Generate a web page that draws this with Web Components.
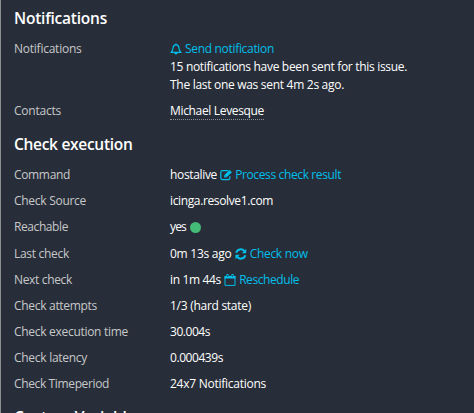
<!DOCTYPE html>
<html lang="en">
<head>
<meta charset="utf-8">
<title>Host detail</title>
<style>
  html, body { margin: 0; height: 100%; overflow: hidden; background: #282e39; }
</style>
</head>
<body>
<detail-pane>
  <detail-section>
    <fit-text slot="title" width="93">Notifications</fit-text>
    <detail-row>
      <fit-text slot="label" width="67.500">Notifications</fit-text>
      <div><action-link icon="bell"><fit-text width="89">Send notification</fit-text></action-link></div>
      <div><fit-text width="237">15 notifications have been sent for this issue.</fit-text></div>
      <div><fit-text width="174">The last one was sent 4m 2s ago.</fit-text></div>
    </detail-row>
    <detail-row>
      <fit-text slot="label" width="47">Contacts</fit-text>
      <contact-name><fit-text width="94">Michael Levesque</fit-text></contact-name>
    </detail-row>
  </detail-section>
  <detail-section>
    <fit-text slot="title" width="118.5">Check execution</fit-text>
    <detail-row>
      <fit-text slot="label" width="56">Command</fit-text>
      <fit-text width="47">hostalive</fit-text>
      <action-link icon="edit"><fit-text width="106">Process check result</fit-text></action-link>
    </detail-row>
    <detail-row>
      <fit-text slot="label" width="72">Check Source</fit-text>
      <fit-text width="103">icinga.resolve1.com</fit-text>
    </detail-row>
    <detail-row>
      <fit-text slot="label" width="54">Reachable</fit-text>
      <fit-text width="16">yes</fit-text>
      <state-ball></state-ball>
    </detail-row>
    <detail-row>
      <fit-text slot="label" width="55">Last check</fit-text>
      <fit-text width="61.5">0m 13s ago</fit-text>
      <action-link icon="refresh"><fit-text width="58">Check now</fit-text></action-link>
    </detail-row>
    <detail-row>
      <fit-text slot="label" width="58">Next check</fit-text>
      <fit-text width="51">in 1m 44s</fit-text>
      <action-link icon="calendar"><fit-text width="60">Reschedule</fit-text></action-link>
    </detail-row>
    <detail-row>
      <fit-text slot="label" width="83">Check attempts</fit-text>
      <fit-text width="81">1/3 (hard state)</fit-text>
    </detail-row>
    <detail-row>
      <fit-text slot="label" width="114">Check execution time</fit-text>
      <fit-text width="40">30.004s</fit-text>
    </detail-row>
    <detail-row>
      <fit-text slot="label" width="73">Check latency</fit-text>
      <fit-text width="53">0.000439s</fit-text>
    </detail-row>
    <detail-row>
      <fit-text slot="label" width="95">Check Timeperiod</fit-text>
      <fit-text width="96">24x7 Notifications</fit-text>
    </detail-row>
  </detail-section>
  <detail-section>
    <fit-text slot="title" width="129">Custom Variables</fit-text>
  </detail-section>
</detail-pane>

<script>
(() => {
  const icons = {
    bell: `<path d="M6 1.600C3.900 1.900 3.100 3.400 3 5.200C2.900 7.100 2.300 8.300 1 9.400H11C9.700 8.300 9.100 7.100 9 5.200C8.900 3.400 8.100 1.900 6 1.600Z" fill="none" stroke="currentColor" stroke-width="1.2" stroke-linejoin="round"/><path d="M5.300.4h1.400v1.400H5.300zM4.300 9.700a1.700 1.700 0 0 0 3.400 0z" fill="currentColor"/>`,
    edit: `<path d="M8.300 1.600H2.500A1.700 1.700 0 0 0 .8 3.300V9A1.700 1.700 0 0 0 2.500 10.700H8.200A1.700 1.700 0 0 0 9.900 9V7.300" fill="none" stroke="currentColor" stroke-width="1.200"/><path d="M9.600.9l2.300 2.300L6.500 8.600H4.200v-2.300z" fill="currentColor"/><path d="M5.200 6.700l.9.9" stroke="#282e39" stroke-width=".7"/>`,
    refresh: `<path d="M1.300 4.800A4.500 4.500 0 0 1 9.300 3.200M10.300 7.200A4.500 4.500 0 0 1 2.300 8.800" fill="none" stroke="currentColor" stroke-width="2"/><path d="M11.200.8v4.400H6.800zM.4 11.200V6.800h4.400z" fill="currentColor"/>`,
    calendar: `<path d="M1 2.400H11V11.400H1z" fill="none" stroke="currentColor" stroke-width="1"/><path d="M.5 2h11v2.500H.5zM2.500 0h2v2.600h-2zM7.500 0h2v2.600h-2z" fill="currentColor"/><path d="M3.500 1v2M8.500 1v2" stroke="#282e39" stroke-width=".6"/>`,
  };

  class FitText extends HTMLElement {
    constructor() {
      super();
      this.attachShadow({ mode: "open" });
      this.shadowRoot.innerHTML = `
        <style>
          :host { display: inline-block; white-space: nowrap; }
        </style>
        <slot></slot>
      `;
    }
    // spread the difference to the wanted width over the letters
    connectedCallback() {
      const range = document.createRange();
      range.selectNodeContents(this);
      const width = Number(this.getAttribute("width"));
      const natural = range.getBoundingClientRect().width;
      this.style.letterSpacing = `${(width - natural) / this.textContent.length}px`;
    }
  }

  class DetailPane extends HTMLElement {
    constructor() {
      super();
      this.attachShadow({ mode: "open" });
      this.shadowRoot.innerHTML = `
        <style>
          :host {
            display: block;
            box-sizing: border-box;
            height: 413px;
            overflow: hidden;
            padding: 6px 12px 0 13px;
            border-left: 1px solid #8b8f94;
            background: #282e39;
            color: #fff;
            font: 12px/18px "Open Sans", "Noto Sans", sans-serif;
          }
        </style>
        <slot></slot>
      `;
    }
  }

  class DetailSection extends HTMLElement {
    constructor() {
      super();
      this.attachShadow({ mode: "open" });
      this.shadowRoot.innerHTML = `
        <style>
          :host { display: block; margin-bottom: 7.500px; }
          h2 { margin: 0 0 6.200px; height: 24px; font-size: 15.5px; font-weight: 600; line-height: 24px; }
        </style>
        <h2><slot name="title"></slot></h2>
        <slot></slot>
      `;
    }
  }

  class DetailRow extends HTMLElement {
    constructor() {
      super();
      this.attachShadow({ mode: "open" });
      this.shadowRoot.innerHTML = `
        <style>
          :host {
            display: grid;
            grid-template-columns: 156px 1fr;
            padding: 4px 0;
            line-height: 18.1px;
          }
          .label { color: #c7c8ca; }
          .value { white-space: nowrap; }
        </style>
        <div class="label"><slot name="label"></slot></div>
        <div class="value"><slot></slot></div>
      `;
    }
  }

  class ActionLink extends HTMLElement {
    constructor() {
      super();
      this.attachShadow({ mode: "open" });
      this.shadowRoot.innerHTML = `
        <style>
          :host { display: inline; color: #00bfea; }
          svg { width: 12px; height: 12px; margin-right: 3px; vertical-align: -2px; }
        </style>
        <a><svg viewBox="0 0 12 12">${icons[this.getAttribute("icon")]}</svg><slot></slot></a>
      `;
    }
  }

  class ContactName extends HTMLElement {
    constructor() {
      super();
      this.attachShadow({ mode: "open" });
      this.shadowRoot.innerHTML = `
        <style>
          :host { display: inline-block; height: 17px; border-bottom: 1px dotted #8c9096; }
        </style>
        <slot></slot>
      `;
    }
  }

  class StateBall extends HTMLElement {
    constructor() {
      super();
      this.attachShadow({ mode: "open" });
      this.shadowRoot.innerHTML = `
        <style>
          :host {
            display: inline-block;
            width: 11px;
            height: 11px;
            margin-left: 1px;
            border-radius: 50%;
            background: #44bb77;
            vertical-align: -1.5px;
          }
        </style>
      `;
    }
  }

  window.customElements.define("detail-pane", DetailPane);
  window.customElements.define("detail-section", DetailSection);
  window.customElements.define("detail-row", DetailRow);
  window.customElements.define("action-link", ActionLink);
  window.customElements.define("contact-name", ContactName);
  window.customElements.define("state-ball", StateBall);
  window.customElements.define("fit-text", FitText);
})();
</script>
</body>
</html>
